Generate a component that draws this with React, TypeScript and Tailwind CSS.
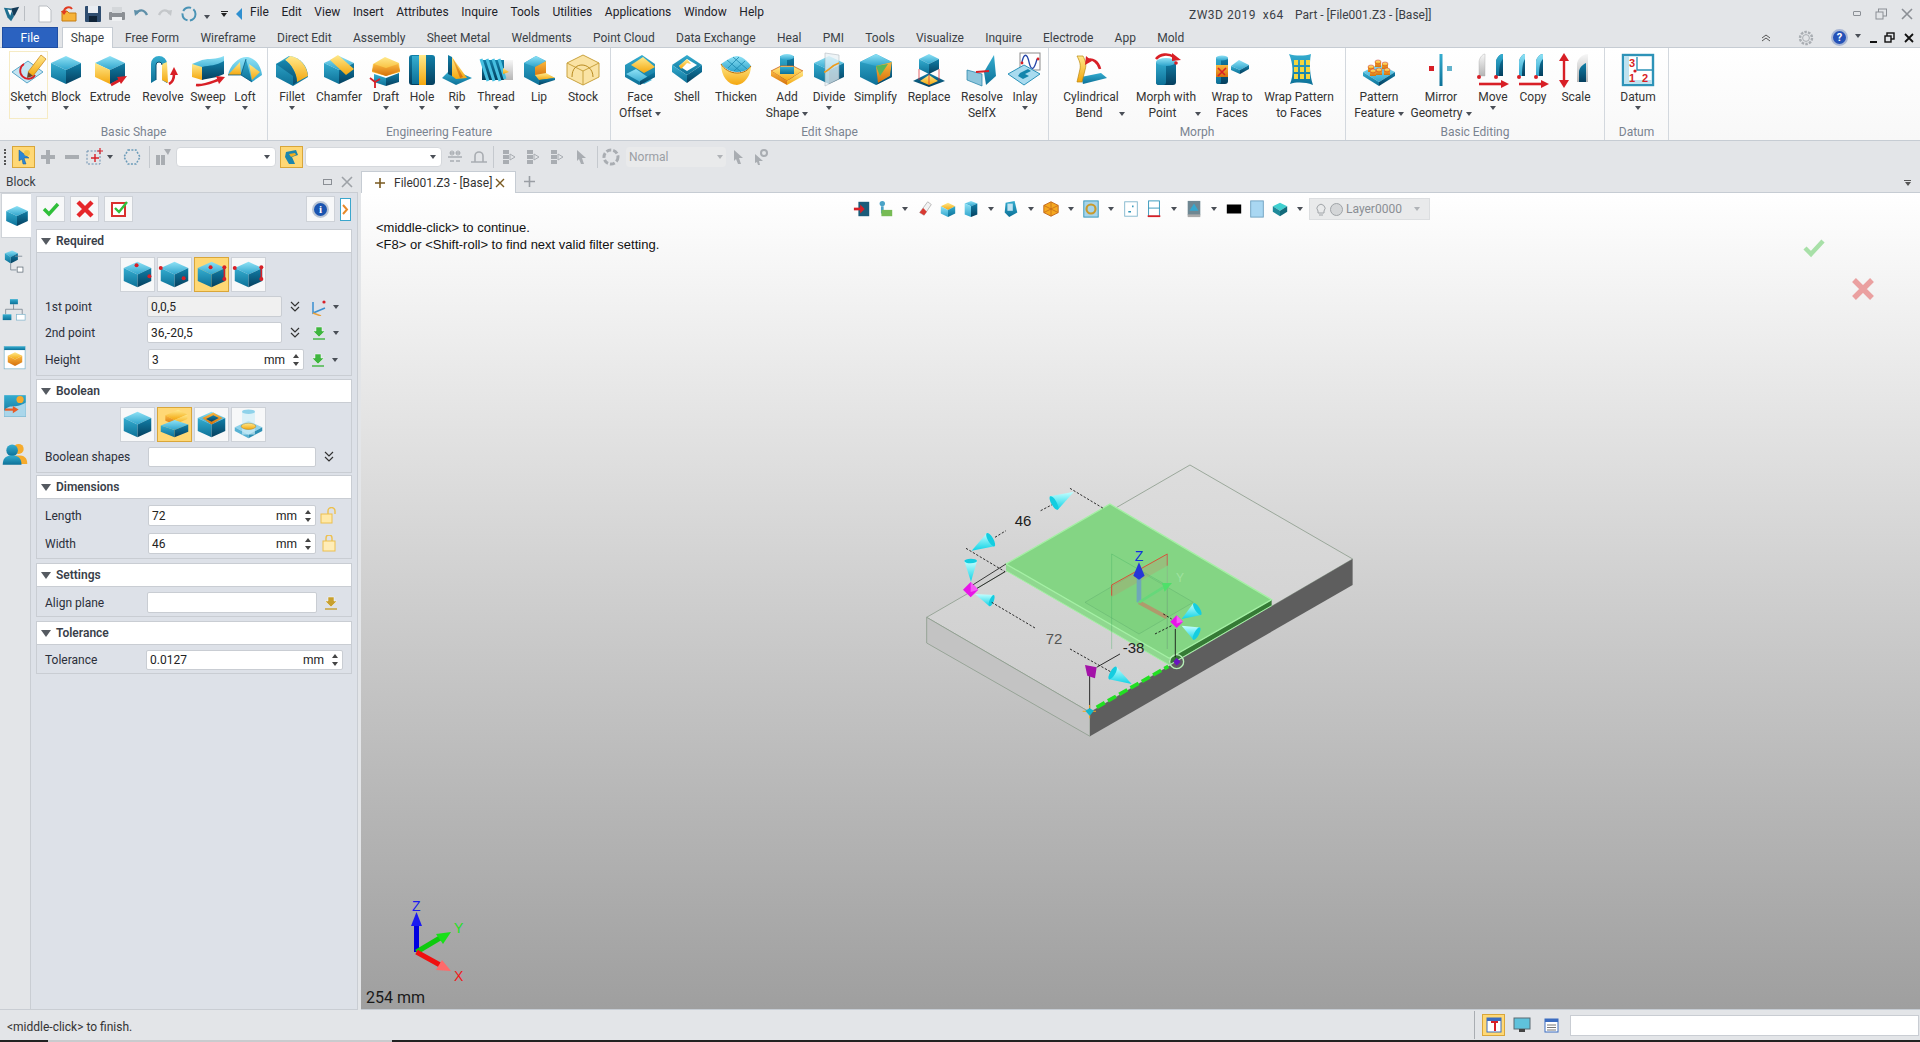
import type { ReactNode } from "react";

const T = "url(#gT)";
const L = "url(#gL)";
const R = "url(#gR)";
const Y = "url(#gY)";
const O = "url(#gO)";
const G = "url(#gG)";
const RED = "#d81f26";

function Defs() {
  const grad = (id: string, a: string, b: string) => (
    <linearGradient id={id} x1="0" y1="0" x2="0" y2="1">
      <stop offset="0" stopColor={a} />
      <stop offset="1" stopColor={b} />
    </linearGradient>
  );
  return (
    <svg className="absolute w-0 h-0">
      <defs>
        {grad("gT", "#8fe2f6", "#2fa4cc")}
        {grad("gL", "#35add0", "#0c7097")}
        {grad("gR", "#117fa8", "#053f5e")}
        {grad("gY", "#ffe98c", "#f4a70e")}
        {grad("gO", "#fab83f", "#d5700b")}
        {grad("gG", "#f7f7f7", "#b5b5b5")}
        {grad("gC", "#c6ffff", "#0fd3e6")}
        {grad("gTop", "#dddddd", "#cdcdcd")}
      </defs>
    </svg>
  );
}

function Ic({ children, s = 36 }: { children: ReactNode; s?: number }) {
  return (
    <svg viewBox="0 0 36 36" width={s} height={s} className="shrink-0">
      {children}
    </svg>
  );
}

function Cube({ t = T, l = L, r = R, op = 1 }: { t?: string; l?: string; r?: string; op?: number }) {
  return (
    <g opacity={op}>
      <polygon points="18,4 33,11 18,18 3,11" fill={t} />
      <polygon points="3,11 18,18 18,32 3,25" fill={l} />
      <polygon points="18,18 33,11 33,25 18,32" fill={r} />
    </g>
  );
}

function Rarrow({ d, head }: { d: string; head: string }) {
  return (
    <>
      <path d={d} fill="none" stroke={RED} strokeWidth="2.6" />
      <polygon points={head} fill={RED} />
    </>
  );
}

const icons: Record<string, ReactNode> = {
  sketch: (
    <>
      <polygon points="1,20 17,9 32,20 16,31" fill="#c4e5f3" stroke="#5aa6c8" />
      <path d="M13 12a8 8 0 1 0 11 11" fill="none" stroke={RED} strokeWidth="1.8" />
      <polygon points="17,20 30,3 35,7 22,24" fill={Y} stroke="#c77f10" strokeWidth=".7" />
      <polygon points="17,20 22,24 16,26" fill="#6b4524" />
    </>
  ),
  block: <Cube />,
  extrude: (
    <>
      <Cube l={Y} />
      <Rarrow d="M19 33l9-5" head="35,24 25,25 29,32" />
    </>
  ),
  revolve: (
    <>
      <path d="M6 31V12a8 8 0 0 1 16 0v19l-5-3V13a3 3 0 0 0-6 0v15z" fill={L} />
      <polygon points="17,12 22,10 23,31 17,28" fill={Y} />
      <path d="M11 28v-15a3 3 0 0 1 6 0" fill="none" stroke="#0a4f70" />
      <Rarrow d="M24 32c4-2 5-6 5-10" head="29,15 25,23 33,23" />
    </>
  ),
  sweep: (
    <>
      <path d="M2 12l10-4c8-2 13 0 22-4v13c-8 3-14 2-22 2z" fill={T} />
      <path d="M12 15c8-2 14-1 22-6v13c-8 4-14 4-22 6z" fill={R} />
      <polygon points="2,12 12,15 12,28 2,25" fill={Y} />
      <Rarrow d="M6 33c8 1 16-3 22-5" head="35,25 26,24 29,32" />
    </>
  ),
  loft: (
    <>
      <path d="M1 23C3 12 13 4 21 5c8 2 13 9 14 18l-10 7-11-7z" fill={T} />
      <polygon points="14,23 19,7 25,30" fill={L} />
      <polygon points="1,23 14,23 13,10" fill={Y} />
      <polygon points="22,12 33,20 25,28" fill={Y} />
      <path d="M19 7L14 23l11 7M1 23h13" fill="none" stroke="#0a5a80" strokeWidth=".8" />
    </>
  ),
  fillet: (
    <>
      <path d="M2 12L15 4c11 1 19 10 19 21l-15 9L2 25z" fill={L} />
      <path d="M11 8l5-4c10 1 17 10 18 20l-11 6c0-9-6-18-12-22z" fill={Y} />
      <path d="M2 12l9-4c6 4 12 13 12 22l-4 3V24z" fill={R} opacity=".75" />
    </>
  ),
  chamfer: (
    <>
      <Cube />
      <polygon points="9,8 17,3 33,17 25,23" fill={Y} />
    </>
  ),
  draft: (
    <>
      <polygon points="5,12 17,5 31,11 32,20 18,24 4,20" fill={Y} />
      <polygon points="4,19 18,24 32,19 30,12 18,16 6,12" fill={O} />
      <polygon points="6,22 18,26 18,34 6,30" fill={L} />
      <polygon points="18,26 31,21 31,30 18,34" fill={R} />
      <path d="M7 36v-6l-5-4m5 4l5-3" fill="none" stroke={RED} strokeWidth="1.8" />
    </>
  ),
  hole: (
    <>
      <rect x="5" y="3" width="26" height="30" rx="3" fill={R} />
      <rect x="8" y="4" width="8" height="28" fill={L} />
      <rect x="15" y="3" width="7" height="30" fill={Y} />
    </>
  ),
  rib: (
    <>
      <polygon points="3,26 17,33 33,26 22,21 17,24 9,20" fill={L} />
      <polygon points="9,3 13,5 13,24 17,26 9,22" fill={R} />
      <polygon points="13,5 28,26 17,27 13,24" fill={Y} />
      <polygon points="13,5 16,10 24,25 21,26" fill={O} />
    </>
  ),
  thread: (
    <>
      <rect x="22" y="8" width="13" height="20" fill={G} />
      <rect x="4" y="8" width="22" height="20" fill={R} />
      <path d="M3 7l7 22M9 7l7 22M15 7l7 22M21 7l6 20" stroke="#47bfe0" strokeWidth="3" />
      <polygon points="25,16 31,20 25,22" fill={Y} />
    </>
  ),
  lip: (
    <>
      <polygon points="3,11 15,4 25,9 25,22 34,26 18,33 3,25" fill={L} />
      <polygon points="15,4 25,9 14,15 3,11" fill={T} />
      <polygon points="14,15 25,9 25,21 18,25 14,23" fill={O} />
      <polygon points="14,23 25,21 34,26 18,28" fill={Y} />
      <polygon points="18,28 34,26 34,28 18,33" fill={R} />
    </>
  ),
  stock: (
    <>
      <polygon points="18,3 34,11 34,25 18,33 2,25 2,11" fill="#fae3a4" stroke="#c9a23e" />
      <path d="M2 11l16 8 16-8M18 19v14" fill="none" stroke="#c9a23e" />
      <path d="M7 25c0-9 5-12 10-12s11 4 11 12" fill="none" stroke="#b88a20" />
    </>
  ),
  faceoffset: (
    <>
      <polygon points="3,13 20,3 33,12 33,25 17,33 3,25" fill={L} />
      <polygon points="9,13 21,5 33,15 22,21" fill={Y} />
      <polygon points="4,22 14,17 30,28 22,32" fill={T} />
      <polygon points="18,33 33,25 33,20 18,29" fill={R} />
    </>
  ),
  shell: (
    <>
      <polygon points="18,3 33,13 18,23 3,13" fill={L} />
      <polygon points="18,7 28,13 18,19 10,14" fill="#fff" />
      <polygon points="18,7 10,14 12,17 18,11 22,12" fill={Y} />
      <polygon points="3,13 18,23 18,31 3,20" fill={L} />
      <polygon points="18,23 33,13 33,20 18,31" fill={R} />
    </>
  ),
  thicken: (
    <>
      <path d="M3 12c6-4 12-8 16-8s10 4 14 10c-3 3-6 6-14 6S7 16 3 12z" fill={T} />
      <path d="M9 8l14 12M15 5l14 12M21 5L10 16M27 9L16 19" stroke="#1a86ad" strokeWidth=".8" />
      <path d="M3 12c3 5 9 9 16 9s11-3 14-7c0 9-6 18-14 19C10 33 3 24 3 12z" fill={Y} />
      <path d="M3 12c3 5 9 9 16 9s11-3 14-7" fill="none" stroke="#b36a05" />
    </>
  ),
  addshape: (
    <>
      <rect x="11" y="4" width="14" height="24" fill={R} />
      <rect x="11" y="4" width="7" height="24" fill={L} />
      <ellipse cx="18" cy="5" rx="7" ry="3" fill={T} />
      <polygon points="2,19 12,14 24,14 34,19 18,29" fill={Y} stroke="#cc5c14" strokeWidth=".8" />
      <rect x="11" y="15" width="14" height="7" fill={L} />
      <polygon points="2,19 18,29 18,33 2,24" fill={O} />
      <polygon points="18,29 34,19 34,24 18,33" fill={Y} />
    </>
  ),
  divide: (
    <>
      <Cube />
      <polygon points="14,1 28,3 28,27 14,34" fill="#e9f1f5" opacity=".75" stroke="#9aa5ad" strokeWidth=".6" />
      <path d="M13 20c4 0 6-6 15-9" fill="none" stroke="#ee9a19" strokeWidth="1.6" />
    </>
  ),
  simplify: (
    <>
      <polygon points="18,2 34,10 34,25 18,33 2,25 2,10" fill={L} />
      <polygon points="2,10 18,2 34,10 18,14" fill={T} />
      <polygon points="18,14 34,10 32,24 20,31" fill={O} />
      <polygon points="18,14 30,12 22,24" fill="#56b55a" />
      <polygon points="18,33 34,25 34,10 32,24 20,31" fill={R} />
    </>
  ),
  replace: (
    <>
      <polygon points="18,21 2,29 18,35 34,29" fill={R} />
      <polygon points="18,23 9,29 18,33 27,29" fill={Y} />
      <polygon points="18,2 28,7 18,12 8,7" fill={T} />
      <polygon points="8,7 18,12 18,22 8,17" fill={L} />
      <polygon points="18,12 28,7 28,17 18,22" fill={R} />
      <path d="M8 17v11M28 17v11M18 22v11" stroke={RED} strokeWidth=".7" />
    </>
  ),
  resolve: (
    <>
      <polygon points="20,20 30,3 32,24 22,33" fill={L} />
      <polygon points="3,18 18,22 18,34 3,28" fill="#8fc6dc" stroke="#1b7ea6" strokeWidth=".7" />
      <path d="M12 20l13-1" stroke={RED} strokeWidth="2.2" />
    </>
  ),
  inlay: (
    <>
      <rect x="13" y="1" width="20" height="17" fill="#fff" stroke="#8b8b8b" />
      <path d="M15 10c2-9 5-9 7 0s5 9 8-3" fill="none" stroke="#2747a8" strokeWidth="1.3" />
      <circle cx="15" cy="11" r="1.4" fill={RED} />
      <circle cx="31" cy="7" r="1.4" fill={RED} />
      <polygon points="1,22 17,13 33,22 17,33" fill="#a9dbef" stroke="#2b93ba" />
      <path d="M13 21l8-4 3 2-6 3 4 2-6 3-5-3z" fill="#1585ad" />
    </>
  ),
  cylbend: (
    <>
      <polygon points="10,32 34,26 28,21 8,25" fill={L} />
      <path d="M4 4h6c2 4 4 8 2 14l-3 12H4l3-13C8 12 6 8 4 4z" fill={Y} stroke="#b9860f" strokeWidth=".7" />
      <Rarrow d="M14 8c6-2 11 2 13 9" head="13,4 12,13 19,9" />
    </>
  ),
  morphpoint: (
    <>
      <rect x="8" y="9" width="20" height="24" rx="3" fill={R} />
      <rect x="8" y="9" width="10" height="24" rx="3" fill={L} />
      <ellipse cx="18" cy="10" rx="10" ry="4" fill={T} />
      <Rarrow d="M8 7c4-5 12-6 18-2" head="33,8 24,1 24,9" />
      <circle cx="28" cy="11" r="1.8" fill={RED} />
    </>
  ),
  wrapfaces: (
    <>
      <rect x="2" y="5" width="12" height="27" rx="3" fill={R} />
      <rect x="2" y="5" width="5" height="27" rx="2" fill={L} />
      <ellipse cx="8" cy="6" rx="6" ry="2.5" fill={T} />
      <rect x="2" y="13" width="12" height="12" fill={O} />
      <path d="M4 24l8-8M4 16l7 7" stroke={RED} strokeWidth="1.6" />
      <polygon points="25,8 35,13 26,18 17,14" fill={T} />
      <polygon points="17,14 26,18 26,22 17,18" fill={L} />
      <polygon points="26,18 35,13 35,17 26,22" fill={R} />
    </>
  ),
  wrappattern: (
    <>
      <path d="M8 2c6 2 16 2 22 0-2 10-1 22 2 31-8-3-17-3-23-1 4-9 3-21-1-30z" fill={L} />
      {[10, 17, 24].map((y) => [13, 19, 25].map((x) => <rect key={`${x}${y}`} x={x} y={y - 2} width="4" height="5" fill="#f6d63c" />))}
    </>
  ),
  pattern: (
    <>
      <polygon points="18,12 34,20 18,30 2,20" fill={T} />
      <polygon points="2,20 18,30 18,34 2,24" fill={L} />
      <polygon points="18,30 34,20 34,24 18,34" fill={R} />
      {[[10, 17], [17, 12], [24, 14], [18, 20], [26, 20], [12, 21]].map(([x, y]) => (
        <g key={`${x}${y}`}>
          <rect x={x - 3} y={y - 2} width="6" height="5" fill={O} />
          <ellipse cx={x} cy={y - 2} rx="3" ry="2" fill={Y} stroke="#c7242a" strokeWidth=".5" />
        </g>
      ))}
    </>
  ),
  mirror: (
    <>
      <rect x="16.5" y="2" width="3" height="32" fill={L} />
      <rect x="6" y="14" width="5" height="5" fill={RED} />
      <rect x="24" y="14" width="5" height="5" fill="#62b2cc" />
    </>
  ),
  move: (
    <>
      <path d="M4 24V10c0-3 3-8 6-8v22z" fill={G} stroke="#aaa" strokeWidth=".4" />
      <path d="M21 24V10c0-3 3-8 7-8v22z" fill={R} />
      <path d="M21 24V10c0-3 3-8 7-8v5c-3 3-4 8-4 17z" fill={L} />
      <circle cx="4" cy="25" r="2" fill={RED} />
      <circle cx="21" cy="25" r="2" fill={RED} />
      <path d="M4 32h22" stroke={RED} strokeWidth="2.6" />
      <polygon points="26,28 34,32 26,36" fill={RED} />
    </>
  ),
  copy: (
    <>
      <path d="M4 24V10c0-3 3-8 6-8v22z" fill={R} />
      <path d="M21 24V10c0-3 3-8 7-8v22z" fill={R} />
      <path d="M4 24V10c0-3 3-8 6-8v5c-2 3-3 8-3 17z" fill={T} />
      <path d="M21 24V10c0-3 3-8 7-8v5c-3 3-4 8-4 17z" fill={T} />
      <circle cx="4" cy="25" r="2" fill={RED} />
      <circle cx="21" cy="25" r="2" fill={RED} />
      <path d="M4 32h22" stroke={RED} strokeWidth="2.6" />
      <polygon points="26,28 34,32 26,36" fill={RED} />
    </>
  ),
  scale: (
    <>
      <path d="M6 7v24" stroke={RED} strokeWidth="2.4" />
      <polygon points="6,1 11,9 1,9" fill={RED} />
      <polygon points="6,36 11,28 1,28" fill={RED} />
      <path d="M19 30V12c0-4 5-10 11-10v28z" fill={G} />
      <path d="M21 30V20c0-4 3-7 7-9v19z" fill={R} />
    </>
  ),
  datum: (
    <>
      <rect x="3" y="3" width="30" height="30" fill="#fff" stroke="#2d93b8" strokeWidth="2.4" />
      <rect x="4" y="4" width="5" height="28" fill="#bfe2ef" />
      <rect x="4" y="28" width="28" height="4" fill="#bfe2ef" />
      <path d="M17 5v13h15" fill="none" stroke="#2d93b8" strokeWidth="1.4" />
      <circle cx="15" cy="19" r="1.6" fill={RED} />
      <text x="9" y="15" fontSize="11" fontWeight="700" fill={RED} fontFamily="Liberation Sans">3</text>
      <text x="9" y="30" fontSize="11" fontWeight="700" fill={RED} fontFamily="Liberation Sans">1</text>
      <text x="22" y="30" fontSize="11" fontWeight="700" fill={RED} fontFamily="Liberation Sans">2</text>
    </>
  ),
};

type Item = { a: string; b?: string; w: string; icon: string; caret?: boolean; b2?: string };
type Group = { title: string; w: string; pad: string; items: Item[] };

const groups: Group[] = [
  {
    title: "Basic Shape",
    w: "w-[268px]",
    pad: "pl-[9px]",
    items: [
      { a: "Sketch", w: "w-[39px]", icon: "sketch", caret: true },
      { a: "Block", w: "w-[36px]", icon: "block", caret: true },
      { a: "Extrude", w: "w-[52px]", icon: "extrude" },
      { a: "Revolve", w: "w-[54px]", icon: "revolve" },
      { a: "Sweep", w: "w-[36px]", icon: "sweep", caret: true },
      { a: "Loft", w: "w-[38px]", icon: "loft", caret: true },
    ],
  },
  {
    title: "Engineering Feature",
    w: "w-[343px]",
    pad: "pl-[2px]",
    items: [
      { a: "Fillet", w: "w-[44px]", icon: "fillet", caret: true },
      { a: "Chamfer", w: "w-[50px]", icon: "chamfer" },
      { a: "Draft", w: "w-[44px]", icon: "draft", caret: true },
      { a: "Hole", w: "w-[28px]", icon: "hole", caret: true },
      { a: "Rib", w: "w-[42px]", icon: "rib", caret: true },
      { a: "Thread", w: "w-[36px]", icon: "thread", caret: true },
      { a: "Lip", w: "w-[50px]", icon: "lip" },
      { a: "Stock", w: "w-[38px]", icon: "stock" },
    ],
  },
  {
    title: "Edit Shape",
    w: "w-[438px]",
    pad: "pl-[7px]",
    items: [
      { a: "Face", b: "Offset", w: "w-[44px]", icon: "faceoffset", caret: true },
      { a: "Shell", w: "w-[50px]", icon: "shell" },
      { a: "Thicken", w: "w-[48px]", icon: "thicken" },
      { a: "Add", b: "Shape", w: "w-[54px]", icon: "addshape", caret: true },
      { a: "Divide", w: "w-[30px]", icon: "divide", caret: true },
      { a: "Simplify", w: "w-[63px]", icon: "simplify" },
      { a: "Replace", w: "w-[44px]", icon: "replace" },
      { a: "Resolve", b: "SelfX", w: "w-[62px]", icon: "resolve" },
      { a: "Inlay", w: "w-[24px]", icon: "inlay", caret: true },
    ],
  },
  {
    title: "Morph",
    w: "w-[297px]",
    pad: "pl-[0px]",
    items: [
      { a: "Cylindrical", b: "Bend", b2: "pl-[18px] gap-[16px]", w: "w-[84px]", icon: "cylbend", caret: true },
      { a: "Morph with", b: "Point", b2: "pl-[18px] gap-[19px]", w: "w-[66px]", icon: "morphpoint", caret: true },
      { a: "Wrap to", b: "Faces", w: "w-[66px]", icon: "wrapfaces" },
      { a: "Wrap Pattern", b: "to Faces", w: "w-[68px]", icon: "wrappattern" },
    ],
  },
  {
    title: "Basic Editing",
    w: "w-[259px]",
    pad: "pl-[0px]",
    items: [
      { a: "Pattern", b: "Feature", w: "w-[66px]", icon: "pattern", caret: true },
      { a: "Mirror", b: "Geometry", w: "w-[58px]", icon: "mirror", caret: true },
      { a: "Move", w: "w-[46px]", icon: "move", caret: true },
      { a: "Copy", w: "w-[34px]", icon: "copy" },
      { a: "Scale", w: "w-[52px]", icon: "scale" },
    ],
  },
  {
    title: "Datum",
    w: "w-[64px]",
    pad: "pl-[3px]",
    items: [{ a: "Datum", w: "w-[60px]", icon: "datum", caret: true }],
  },
];

function Caret({ c = "border-t-[#4a4f57]" }: { c?: string }) {
  return <span className={`inline-block w-0 h-0 border-x-[3px] border-x-transparent border-t-[4px] ${c}`} />;
}

function RibbonButton({ it }: { it: Item }) {
  const hover = it.a === "Sketch" ? "border-[#f6ebc4]" : "border-transparent";
  return (
    <div className={`${it.w} shrink-0 h-[68px] border ${hover} flex flex-col items-center`}>
      <div className="h-[36px] w-full flex justify-center">
        <Ic>{icons[it.icon]}</Ic>
      </div>
      <div className="mt-[2px] text-xs leading-[15px] whitespace-nowrap flex justify-center">{it.a}</div>
      <div className={`mt-[1px] text-xs leading-[15px] whitespace-nowrap flex justify-center items-center ${it.b2 ?? "gap-[3px]"}`}>
        {it.b}
        {it.caret && <Caret />}
      </div>
    </div>
  );
}

function Ribbon() {
  return (
    <div className="h-[94px] border-y border-[#c6ccd3] bg-gradient-to-b from-white to-[#f8f8f8] flex shrink-0">
      {groups.map((g) => (
        <div key={g.title} className={`${g.w} shrink-0 border-r border-[#d3d8de] flex flex-col`}>
          <div className={`flex pt-[3px] h-[76px] ${g.pad}`}>
            {g.items.map((it) => (
              <RibbonButton key={it.a} it={it} />
            ))}
          </div>
          <div className="text-xs leading-[14px] mt-[1px] text-center text-[#7a8390]">{g.title}</div>
        </div>
      ))}
    </div>
  );
}

function TitleBar() {
  const menus = ["File", "Edit", "View", "Insert", "Attributes", "Inquire", "Tools", "Utilities", "Applications", "Window", "Help"];
  return (
    <div className="h-[27px] flex items-center shrink-0 relative">
      <div className="w-[24px] pl-[3px] flex">
        <svg viewBox="0 0 20 20" width="18" height="18">
          <path d="M1 3l8 1 3 9-3 5-4-4z" fill="#1f6f90" />
          <path d="M9 4l9-2-4 8-2 3z" fill="#143b57" />
          <path d="M5 5l3 7 2-6z" fill="#fff" />
        </svg>
      </div>
      <div className="w-px h-[15px] bg-[#b9bdc2] mr-[8px]" />
      <div className="flex items-center w-[168px]">
        <span className="w-[24px] flex justify-center">
          <svg width="14" height="18" viewBox="0 0 14 18"><path d="M1 1h8l4 4v12H1z" fill="#fff" stroke="#b9bdc2" /></svg>
        </span>
        <span className="w-[24px] flex justify-center">
          <svg width="18" height="18" viewBox="0 0 18 18"><path d="M2 6h5l2 2h7v8H2z" fill="#f6b338" stroke="#c67d12" /><path d="M4 7c0-5 6-6 8-3" fill="none" stroke="#e13b21" strokeWidth="2" /><polygon points="1,6 7,6 4,10" fill="#e13b21" /></svg>
        </span>
        <span className="w-[24px] flex justify-center">
          <svg width="18" height="18" viewBox="0 0 18 18"><rect x="1" y="1" width="16" height="16" rx="1" fill="#2f4d70" /><rect x="4" y="1" width="10" height="7" fill="#e9edf2" /><rect x="5" y="11" width="8" height="6" fill="#0f2338" /></svg>
        </span>
        <span className="w-[24px] flex justify-center">
          <svg width="18" height="18" viewBox="0 0 18 18"><rect x="1" y="7" width="16" height="8" rx="1" fill="#8b8f94" /><rect x="4" y="2" width="10" height="6" fill="#d4d7da" /><rect x="4" y="12" width="10" height="4" fill="#eef0f2" /></svg>
        </span>
        <span className="w-[24px] flex justify-center">
          <svg width="16" height="16" viewBox="0 0 16 16"><path d="M3 8c3-5 8-5 11 1" fill="none" stroke="#5e8fa8" strokeWidth="2.4" /><polygon points="1,4 7,5 2,10" fill="#5e8fa8" /></svg>
        </span>
        <span className="w-[24px] flex justify-center">
          <svg width="16" height="16" viewBox="0 0 16 16"><path d="M13 8C10 3 5 3 2 9" fill="none" stroke="#c4c7ca" strokeWidth="2.4" /><polygon points="15,4 9,5 14,10" fill="#c4c7ca" /></svg>
        </span>
        <span className="w-[24px] flex justify-center">
          <svg width="18" height="18" viewBox="0 0 18 18"><circle cx="9" cy="9" r="6.5" fill="none" stroke="#4a93b5" strokeWidth="2" strokeDasharray="9 2.5" /></svg>
        </span>
      </div>
      <span className="ml-[3px] w-[12px]"><Caret /></span>
      <span className="w-[16px] flex flex-col items-center gap-[1px]"><span className="w-[7px] h-px bg-[#222]" /><Caret c="border-t-[#222]" /></span>
      <span className="w-[14px] flex justify-center"><span className="w-0 h-0 border-y-[6px] border-y-transparent border-r-[6px] border-r-[#2f8fd0]" /></span>
      <div className="flex gap-[12.6px] w-[939px] text-xs ml-[4px] text-[#1e2228] -mt-[3px]">
        {menus.map((m) => (
          <span key={m}>{m}</span>
        ))}
      </div>
      <span className="w-[106px] text-xs tracking-[0.5px] text-[#3a3f46] mt-[3px] whitespace-pre">ZW3D 2019  x64</span>
      <span className="text-xs text-[#3a3f46] mt-[3px]">Part - [File001.Z3 - [Base]]</span>
      <div className="ml-auto flex items-center gap-[14px] pr-[7px] text-[#8b8f95]">
        <span className="w-[8px] h-[5px] border border-[#8b8f95] rounded-[1px]" />
        <svg width="12" height="12" viewBox="0 0 12 12"><rect x="3.5" y="1" width="8" height="7" fill="none" stroke="#8b8f95" /><rect x="1" y="4" width="7" height="7" fill="#e3e5e8" stroke="#8b8f95" /></svg>
        <svg width="12" height="12" viewBox="0 0 12 12"><path d="M1 1l10 10M11 1L1 11" stroke="#8b8f95" strokeWidth="1.6" /></svg>
      </div>
    </div>
  );
}

function TabBar() {
  const tabs = ["Free Form", "Wireframe", "Direct Edit", "Assembly", "Sheet Metal", "Weldments", "Point Cloud", "Data Exchange", "Heal", "PMI", "Tools", "Visualize", "Inquire", "Electrode", "App", "Mold"];
  return (
    <div className="h-[21px] flex items-end text-xs shrink-0 relative z-10 -mb-px">
      <div className="ml-[2px] w-[56px] h-[21px] bg-[#2b62c0] border border-[#1f4ea3] text-white flex items-center justify-center">File</div>
      <div className="ml-[4px] w-[51px] h-[21px] bg-white border-x border-t border-[#c6ccd3] flex items-center justify-center text-[#3a3f46]">Shape</div>
      <div className="flex gap-[21.3px] ml-[12px] h-[20px] items-center text-[#3a3f46]">
        {tabs.map((t) => (
          <span key={t} className="whitespace-nowrap">{t}</span>
        ))}
      </div>
      <div className="ml-auto h-[21px] flex items-center pr-[6px]">
        <svg width="12" height="12" viewBox="0 0 12 12"><path d="M2 6l4-3 4 3M2 9l4-3 4 3" fill="none" stroke="#555" /></svg>
        <svg className="ml-[25px]" width="18" height="18" viewBox="0 0 18 18"><circle cx="9" cy="9" r="6" fill="none" stroke="#a9adb2" strokeWidth="2.4" strokeDasharray="2.5 1.2" /><circle cx="9" cy="9" r="3.4" fill="none" stroke="#a9adb2" /></svg>
        <span className="ml-[16px] w-[17px] h-[17px] rounded-full bg-[#2552b8] border-2 border-[#a8b6d4] text-white text-[11px] font-bold leading-none flex items-center justify-center">?</span>
        <span className="ml-[7px] -mt-[4px] flex"><Caret /></span>
        <span className="ml-[9px] w-[7px] h-[2px] bg-[#111] mt-[8px]" />
        <svg className="ml-[7px]" width="11" height="11" viewBox="0 0 11 11"><rect x="3" y="1" width="7" height="6" fill="none" stroke="#111" strokeWidth="1.4" /><rect x="1" y="4" width="6" height="6" fill="#e3e5e8" stroke="#111" strokeWidth="1.4" /></svg>
        <svg className="ml-[9px]" width="10" height="10" viewBox="0 0 10 10"><path d="M1 1l8 8M9 1L1 9" stroke="#111" strokeWidth="1.8" /></svg>
      </div>
    </div>
  );
}

function Combo({ w, text }: { w: string; text?: string }) {
  return (
    <div className={`${w} h-[20px] shrink-0 bg-white border border-[#d5d8dc] rounded-sm flex items-center justify-end pr-[5px]`}>
      {text}
      <Caret />
    </div>
  );
}

function G20({ children }: { children: ReactNode }) {
  return (
    <svg viewBox="0 0 20 20" width="20" height="20" className="shrink-0">
      {children}
    </svg>
  );
}

const Y_BTN = "bg-[#ffd875] border border-[#d9a63a] flex items-center justify-center shrink-0";

function Toolbar() {
  const gray = "#a9adb2";
  const Sep = () => <span className="block w-px h-[22px] bg-[#c5c9ce] shrink-0" />;
  return (
    <div className="h-[30px] pt-[2px] flex items-center shrink-0">
      <span className="ml-[4px] w-[2px] h-[16px] border-l-2 border-dotted border-[#555]" />
      <div className={`ml-[6px] w-[23px] h-[22px] ${Y_BTN}`}>
        <svg width="16" height="16" viewBox="0 0 16 16"><polygon points="3,1 13,9 8,9 10,15 7,15 6,10 3,12" fill="#2b86d6" stroke="#135a9a" strokeWidth=".5" /><circle cx="11" cy="4" r="3" fill="#f3c64b" /></svg>
      </div>
      <div className="ml-[2px] w-[22px] flex justify-center"><G20><path d="M10 3v14M3 10h14" stroke={gray} strokeWidth="4" /></G20></div>
      <div className="ml-[1px] w-[24px] flex justify-center"><G20><path d="M3 10h14" stroke={gray} strokeWidth="4" /></G20></div>
      <div className="-ml-[2px] w-[24px] flex justify-center"><G20><rect x="3" y="4" width="13" height="13" fill="none" stroke="#6a8fb0" strokeDasharray="2 1.6" /><path d="M7 11h8M11 7v8" stroke={RED} strokeWidth="1.4" /><path d="M13 4h6M16 1v6" stroke={RED} strokeWidth="1.2" /></G20></div>
      <span className="ml-[1px] w-[14px] flex"><Caret /></span>
      <div className="w-[22px] flex justify-center"><G20><polygon points="6,3 14,3 18,10 14,17 6,17 2,10" fill="none" stroke="#6a9ab8" strokeWidth="1.5" strokeDasharray="2 1.4" /></G20></div>
      <span className="ml-[6px]"><Sep /></span>
      <div className="ml-[1px] w-[23px] flex justify-center"><G20><rect x="3" y="8" width="4" height="10" fill={gray} /><rect x="8" y="8" width="4" height="10" fill={gray} /><polygon points="11,2 18,2 15,8" fill={gray} /></G20></div>
      <div className="ml-[2px]"><Combo w="w-[100px]" /></div>
      <div className={`ml-[4px] w-[23px] h-[22px] ${Y_BTN}`}>
        <svg width="17" height="17" viewBox="0 0 17 17"><polygon points="3,3 13,1 15,6 9,8 12,15 6,15 2,8" fill="#1d86ad" /><polygon points="6,5 12,4 13,6 8,8" fill="#f3ae1d" /></svg>
      </div>
      <div className="ml-[2px]"><Combo w="w-[137px]" /></div>
      <div className="ml-[2px] w-[22px] flex justify-center"><G20><path d="M3 10h14M5 6h4M11 6h4M5 14h4M11 14h4" stroke={gray} strokeWidth="1.4" /><circle cx="7" cy="6" r="2" fill="none" stroke={gray} /><circle cx="13" cy="6" r="2" fill="none" stroke={gray} /></G20></div>
      <div className="ml-[1px] w-[24px] flex justify-center"><G20><path d="M2 15h16M6 15V9a4 4 0 0 1 8 0v6" fill="none" stroke={gray} strokeWidth="1.6" /></G20></div>
      <span className="ml-[2px]"><Sep /></span>
      {[0, 1, 2].map((k) => (
        <div key={k} className="ml-[2px] w-[22px] flex justify-center"><G20><path d="M6 3h6v4H6zM6 8h6v4H6zM6 13h6v4H6z" fill={gray} /><polygon points="13,7 18,10 13,13" fill="#e3e5e8" stroke={gray} /></G20></div>
      ))}
      <div className="ml-[4px] w-[22px] flex justify-center"><G20><polygon points="6,3 15,11 11,11 13,17 10,17 8,12 6,14" fill={gray} /></G20></div>
      <span className="ml-[5px]"><Sep /></span>
      <div className="ml-[2px] w-[22px] flex justify-center"><G20><circle cx="10" cy="10" r="7" fill="none" stroke={gray} strokeWidth="3" strokeDasharray="5 2" /></G20></div>
      <div className="ml-[4px] w-[100px] h-[20px] bg-[#e9eaeb] rounded-sm flex items-center justify-between px-[3px] text-xs text-[#9a9ea4]">
        Normal
        <Caret c="border-t-[#b0b3b7]" />
      </div>
      <div className="ml-[2px] w-[22px] flex justify-center"><G20><polygon points="5,3 14,11 10,11 12,17 9,17 7,12 5,14" fill={gray} /></G20></div>
      <div className="w-[22px] flex justify-center"><G20><polygon points="4,7 12,14 8,14 9,18 7,18 6,15 4,16" fill={gray} /><circle cx="13" cy="6" r="3" fill="none" stroke={gray} strokeWidth="2" /></G20></div>
    </div>
  );
}

function PanelBtn({ sel, children }: { sel?: boolean; children: ReactNode }) {
  return (
    <div className={`w-[35px] h-[35px] flex items-center justify-center border shrink-0 ${sel ? "bg-[#ffd875] border-[#d9a63a]" : "bg-[#f7f8f9] border-[#ced2d8]"}`}>
      <Ic s={33}>{children}</Ic>
    </div>
  );
}

function Dot({ x, y }: { x: number; y: number }) {
  return <circle cx={x} cy={y} r="2.2" fill={RED} />;
}

function Section({ title, children, cls }: { title: string; children: ReactNode; cls: string }) {
  return (
    <div className={`${cls} border border-[#c9cdd3]`}>
      <div className="h-[23px] bg-white border-b border-[#c9cdd3] flex items-center">
        <span className="ml-[4px] w-0 h-0 border-x-[5px] border-x-transparent border-t-[7px] border-t-[#555a61]" />
        <span className="ml-[5px] text-xs font-semibold text-[#3a3f4a]">{title}</span>
      </div>
      {children}
    </div>
  );
}

function Chevrons() {
  return (
    <svg width="12" height="12" viewBox="0 0 12 12" className="shrink-0">
      <path d="M2 1l4 4 4-4M2 6l4 4 4-4" fill="none" stroke="#333" strokeWidth="1.2" />
    </svg>
  );
}

function Spin() {
  return (
    <span className="flex flex-col gap-[4px] ml-[8px]">
      <span className="w-0 h-0 border-x-[3px] border-x-transparent border-b-[4px] border-b-[#444]" />
      <span className="w-0 h-0 border-x-[3px] border-x-transparent border-t-[4px] border-t-[#444]" />
    </span>
  );
}

function GreenPick({ c = "#3fb53f" }: { c?: string }) {
  return (
    <svg width="16" height="16" viewBox="0 0 16 16" className="shrink-0">
      <polygon points="5,2 11,2 11,6 14,6 8,12 2,6 5,6" fill={c} stroke="#fff" strokeWidth=".5" />
      <path d="M2 14h12" stroke={c} strokeWidth="1.4" />
    </svg>
  );
}

function Input({ w, h = "h-[21px]", bg = "bg-white", text, unit }: { w: string; h?: string; bg?: string; text?: string; unit?: boolean }) {
  return (
    <div className={`${w} ${h} ${bg} shrink-0 border border-[#c9cdd3] rounded-[2px] flex items-center pl-[3px] pr-[4px] text-xs text-[#222]`}>
      <span>{text}</span>
      {unit && (
        <>
          <span className="ml-auto">mm</span>
          <Spin />
        </>
      )}
    </div>
  );
}

function Label({ children }: { children: ReactNode }) {
  return <span className="ml-[8px] w-[102px] shrink-0 text-xs text-[#2b2f3a] whitespace-nowrap">{children}</span>;
}

function Panel() {
  const railIcons = [
    <g key="t">
      <polygon points="4,6 14,2 22,6 12,11" fill={T} /><polygon points="4,6 12,11 12,20 4,15" fill={L} /><polygon points="12,11 22,6 22,15 12,20" fill={R} />
      <path d="M12 20v9h8M18 10h10" stroke="#7d8a96" strokeWidth="1.2" fill="none" /><rect x="21" y="25" width="8" height="7" fill="#fff" stroke="#5b6873" />
    </g>,
    <g key="h">
      <rect x="11" y="3" width="11" height="7" fill={L} /><path d="M16 10v7M5 24v-7h23v7" stroke="#6e7b86" fill="none" /><rect x="1" y="24" width="12" height="8" fill={L} /><rect x="20" y="24" width="12" height="8" fill="#fff" stroke="#7fb5cc" />
    </g>,
    <g key="c">
      <rect x="3" y="2" width="29" height="31" fill="#fff" stroke="#7fb5cc" /><rect x="3" y="2" width="29" height="5" fill={L} />
      <polygon points="18,10 28,15 18,20 8,15" fill={Y} /><polygon points="8,15 18,20 18,29 8,24" fill={O} /><polygon points="18,20 28,15 28,24 18,29" fill={O} />
    </g>,
    <g key="i">
      <rect x="3" y="3" width="30" height="30" fill={L} /><path d="M3 25c8-12 14-2 30-12v20H3z" fill="#aad6ea" />
      <circle cx="25" cy="9" r="5" fill="#f6ab2c" /><path d="M4 23h12" stroke="#e85c25" strokeWidth="3" /><polygon points="15,18 23,23 15,28" fill="#e85c25" />
    </g>,
    <g key="u">
      <circle cx="23" cy="11" r="7" fill="#f6ab2c" /><path d="M10 32c0-10 6-12 13-12s12 2 12 12z" fill="#f6ab2c" />
      <circle cx="14" cy="13" r="8" fill={L} /><path d="M1 33c0-11 6-13 13-13s13 2 13 13z" fill={L} />
    </g>,
  ];
  return (
    <div className="w-[358px] shrink-0 flex flex-col">
      <div className="h-[21px] flex items-center justify-between pl-[6px] pr-[5px] text-xs text-[#3a3f46] shrink-0">
        <span>Block</span>
        <div className="flex items-center gap-[9px]">
          <span className="w-[9px] h-[6px] border border-[#8b8f95]" />
          <svg width="12" height="12" viewBox="0 0 12 12"><path d="M1 1l10 10M11 1L1 11" stroke="#9ea2a7" strokeWidth="1.6" /></svg>
        </div>
      </div>
      <div className="flex-1 flex min-h-0 border-y border-[#c9cdd3]">
        <div className="w-[31px] shrink-0 flex flex-col items-center border-r border-[#c9cdd3]">
          <div className="w-[30px] h-[45px] bg-white border-y border-l border-[#cfd3d8] -mr-[1px] ml-[1px] relative z-10 flex items-center justify-center">
            <Ic s={26}><Cube /></Ic>
          </div>
          <div className="flex flex-col items-center gap-[22px] mt-[11px]">
            {railIcons.map((ic, i) => (
              <Ic key={i} s={26}>{ic}</Ic>
            ))}
          </div>
        </div>
        <div className="flex-1 bg-[#dde1e8] border-r border-[#c9cdd3] px-[5px] pt-[3px]">
          <div className="flex h-[26px] items-center">
            <div className="w-[29px] h-[26px] bg-[#f7f8f9] border border-[#ced2d8] flex items-center justify-center">
              <svg width="18" height="16" viewBox="0 0 18 16"><path d="M2 8l5 5 9-10" fill="none" stroke="#2fbf3a" strokeWidth="3.4" /></svg>
            </div>
            <div className="ml-[5px] w-[29px] h-[26px] bg-[#f7f8f9] border border-[#ced2d8] flex items-center justify-center">
              <svg width="18" height="18" viewBox="0 0 18 18"><path d="M2 2l14 14M16 2L2 16" stroke="#e5262a" strokeWidth="4.4" /></svg>
            </div>
            <div className="ml-[5px] w-[29px] h-[26px] bg-[#f7f8f9] border border-[#ced2d8] flex items-center justify-center">
              <svg width="18" height="18" viewBox="0 0 18 18"><rect x="2" y="3" width="13" height="13" fill="#fff" stroke="#d9302f" strokeWidth="2" /><path d="M5 8l4 4 8-10" fill="none" stroke="#2fbf3a" strokeWidth="2.4" /></svg>
            </div>
            <div className="ml-auto w-[29px] h-[26px] bg-[#f7f8f9] border border-[#ced2d8] flex items-center justify-center">
              <span className="w-[17px] h-[17px] rounded-full bg-[#1a54b0] border-2 border-[#b9c4d4] text-white text-[11px] font-bold leading-none flex items-center justify-center font-['Liberation_Serif',serif]">i</span>
            </div>
            <div className="ml-[5px] mr-[1px] w-[11px] h-[23px] bg-white border border-[#3ba6cc] flex items-center justify-center">
              <svg width="7" height="11" viewBox="0 0 7 11"><path d="M1 1l4 4.5L1 10" fill="none" stroke="#e88a2a" strokeWidth="2" /></svg>
            </div>
          </div>

          <Section title="Required" cls="mt-[7px]">
            <div className="pt-[4px] pb-[5px]">
              <div className="flex justify-center gap-[2px] pr-[3px]">
                <PanelBtn><Cube /><Dot x={17} y={8} /><Dot x={31} y={20} /></PanelBtn>
                <PanelBtn><Cube /><Dot x={3} y={11} /><Dot x={28} y={22} /></PanelBtn>
                <PanelBtn sel><Cube /><Dot x={17} y={10} /><path d="M32 10v13" stroke={RED} strokeWidth="1.6" /><Dot x={32} y={10} /><Dot x={32} y={23} /></PanelBtn>
                <PanelBtn><Cube /><Dot x={3} y={11} /><path d="M32 10v13" stroke={RED} strokeWidth="1.6" /><Dot x={32} y={10} /><Dot x={32} y={23} /></PanelBtn>
              </div>
              <div className="flex items-center mt-[4px]">
                <Label>1st point</Label>
                <Input w="w-[135px]" bg="bg-[#f0f0f0]" text="0,0,5" />
                <span className="ml-[7px]"><Chevrons /></span>
                <svg className="ml-[9px]" width="18" height="18" viewBox="0 0 18 18"><path d="M3 4v11l12-5" fill="none" stroke="#3a8fd0" strokeWidth="1.5" /><path d="M3 15l8 3" stroke="#e8a03a" strokeWidth="1.5" /><circle cx="14" cy="4" r="1.6" fill={RED} /></svg>
                <span className="ml-[5px] flex"><Caret /></span>
              </div>
              <div className="flex items-center mt-[5px]">
                <Label>2nd point</Label>
                <Input w="w-[135px]" text="36,-20,5" />
                <span className="ml-[7px]"><Chevrons /></span>
                <span className="ml-[10px]"><GreenPick /></span>
                <span className="ml-[6px] flex"><Caret /></span>
              </div>
              <div className="flex items-center mt-[6px]">
                <span className="ml-[8px] w-[103px] shrink-0 text-xs text-[#2b2f3a]">Height</span>
                <Input w="w-[156px]" text="3" unit />
                <span className="ml-[6px]"><GreenPick /></span>
                <span className="ml-[6px] flex"><Caret /></span>
              </div>
            </div>
          </Section>

          <Section title="Boolean" cls="mt-[3px]">
            <div className="pt-[4px] pb-[5px]">
              <div className="flex justify-center gap-[2px] pr-[3px]">
                <PanelBtn><Cube /></PanelBtn>
                <PanelBtn sel>
                  <polygon points="8,8 22,2 32,7 18,13" fill={Y} /><polygon points="8,8 18,13 18,18 8,14" fill={O} /><polygon points="18,13 32,7 32,12 18,18" fill={Y} />
                  <polygon points="3,19 18,13 33,18 18,24" fill={T} /><polygon points="3,19 18,24 18,32 3,26" fill={L} /><polygon points="18,24 33,18 33,26 18,32" fill={R} />
                </PanelBtn>
                <PanelBtn>
                  <Cube /><polygon points="8,11 20,5 30,11 18,18" fill={O} /><polygon points="12,12 20,8 26,11 18,15" fill={R} />
                </PanelBtn>
                <PanelBtn>
                  <polygon points="3,21 18,14 33,21 18,29" fill="#8fd2ea" /><polygon points="3,21 18,29 18,33 3,25" fill="#57b2d4" /><polygon points="18,29 33,21 33,25 18,33" fill="#2d8fb4" />
                  <rect x="11" y="3" width="14" height="26" fill="#cfeef8" opacity=".7" /><ellipse cx="18" cy="4" rx="7" ry="2.5" fill="#8fd2ea" /><ellipse cx="18" cy="20" rx="8" ry="3.4" fill={Y} stroke="#9a7a20" strokeWidth=".5" />
                </PanelBtn>
              </div>
              <div className="flex items-center mt-[5px]">
                <span className="ml-[8px] w-[103px] shrink-0 text-xs text-[#2b2f3a] whitespace-nowrap">Boolean shapes</span>
                <Input w="w-[168px]" h="h-[20px]" />
                <span className="ml-[7px]"><Chevrons /></span>
              </div>
            </div>
          </Section>

          <Section title="Dimensions" cls="mt-[2px]">
            <div className="pt-[6px] pb-[4px] flex flex-col gap-[7px]">
              <div className="flex items-center">
                <span className="ml-[8px] w-[103px] shrink-0 text-xs text-[#2b2f3a]">Length</span>
                <Input w="w-[168px]" text="72" unit />
                <svg className="ml-[4px]" width="17" height="17" viewBox="0 0 17 17"><rect x="1" y="7" width="11" height="9" fill="#ffe9a8" stroke="#edc04e" /><path d="M8 7V4a3.5 3.5 0 0 1 7 0v3" fill="none" stroke="#edc04e" strokeWidth="1.4" /></svg>
              </div>
              <div className="flex items-center">
                <span className="ml-[8px] w-[103px] shrink-0 text-xs text-[#2b2f3a]">Width</span>
                <Input w="w-[168px]" text="46" unit />
                <svg className="ml-[6px]" width="14" height="17" viewBox="0 0 14 17"><rect x="1" y="6" width="12" height="10" fill="#ffedb8" stroke="#edc04e" /><path d="M4 6V3a3 3 0 0 1 6 0v3" fill="none" stroke="#edc04e" strokeWidth="1.4" /></svg>
              </div>
            </div>
          </Section>

          <Section title="Settings" cls="mt-[4px]">
            <div className="pt-[5px] pb-[3px] flex items-center">
              <Label>Align plane</Label>
              <Input w="w-[170px]" />
              <span className="ml-[6px]"><GreenPick c="#c8a02e" /></span>
            </div>
          </Section>

          <Section title="Tolerance" cls="mt-[4px]">
            <div className="pt-[5px] pb-[3px] flex items-center">
              <span className="ml-[8px] w-[101px] shrink-0 text-xs text-[#2b2f3a]">Tolerance</span>
              <Input w="w-[197px]" h="h-[20px]" text="0.0127" unit />
            </div>
          </Section>
        </div>
      </div>
    </div>
  );
}

function Cone({ tx, ty, bx, by, r }: { tx: number; ty: number; bx: number; by: number; r: number }) {
  const a = Math.atan2(by - ty, bx - tx);
  const px = -Math.sin(a) * r;
  const py = Math.cos(a) * r;
  const deg = (a * 180) / Math.PI;
  return (
    <g>
      <polygon points={`${tx},${ty} ${bx + px},${by + py} ${bx - px},${by - py}`} fill="url(#gC)" />
      <ellipse cx={bx} cy={by} rx={r * 0.35} ry={r} fill="#14cde0" transform={`rotate(${deg} ${bx} ${by})`} />
    </g>
  );
}

function Octa({ x, y, r }: { x: number; y: number; r: number }) {
  return (
    <g>
      <polygon points={`${x},${y - r} ${x + r},${y} ${x},${y + r} ${x - r},${y}`} fill="#e815e8" />
      <polygon points={`${x},${y - r} ${x + r},${y} ${x},${y + r * 0.3}`} fill="#f55cf5" />
    </g>
  );
}

function Scene() {
  const dash = { stroke: "#111", strokeWidth: 2.6, strokeDasharray: "7 5", fill: "none" };
  return (
    <svg className="absolute left-0 top-0" width="1559" height="816" viewBox="361 194 1559 816">
      {/* scene coords below are in 3x units, offset from 900,450 */}
      <g transform="translate(900 450) scale(0.3333)" fontFamily="Liberation Sans">
        <polygon points="870,48 1358,330 570,790 80,505" fill="url(#gTop)" stroke="#8e9e8e" strokeWidth="2.5" />
        <polygon points="80,505 570,790 570,862 80,582" fill="#c3c3c3" stroke="#8e9e8e" strokeWidth="2.5" />
        <polygon points="570,790 1358,330 1358,408 570,862" fill="#5e5e5e" />

        <polygon points="318,345 808,628 808,648 318,365" fill="#8fd88f" />
        <polygon points="808,628 1115,452 1115,470 808,648" fill="#357a35" />
        <polygon points="630,165 1115,452 808,628 318,345" fill="#84d584" stroke="#a4f0a4" strokeWidth="4" />
        <path d="M318 365L808 648L1115 470" fill="none" stroke="#a4f0a4" strokeWidth="3" />

        <path d="M555 460L717 365L880 460L717 555Z" fill="#6cc76c" fillOpacity=".2" stroke="#5aa86a" strokeWidth="1.2" />
        <polygon points="635,408 802,315 802,350 635,445" fill="#b89a70" fillOpacity=".35" />
        <path d="M635 600V315L802 410V600" fill="none" stroke="#3fae5f" strokeWidth="1.5" opacity=".7" />
        <path d="M635 440V408L802 315V350" fill="none" stroke="#e8382a" strokeWidth="2.5" />
        <path d="M802 315V600" stroke="#8aa88a" strokeWidth="1.5" />
        <path d="M717 460V380" stroke="#6fa8b8" strokeWidth="14" />
        <path d="M717 460L800 505" stroke="#b09a6c" strokeWidth="12" />
        <path d="M717 460L790 415" stroke="#66d87a" strokeWidth="8" />
        <polygon points="786,402 816,402 794,428" fill="#4fe06a" />
        <polygon points="717,340 734,380 717,392 700,380" fill="#2636d8" />
        <text x="704" y="336" fontSize="42" fill="#1030e0">Z</text>
        <text x="828" y="398" fontSize="36" fill="#9fe29f">Y</text>

        <path d="M510 118L610 178M422 185L470 160" {...dash} />
        <Cone tx={522} ty={128} bx={462} by={162} r={23} />
        <text x="344" y="232" fontSize="45" fill="#1c1c1c">46</text>
        <path d="M285 265L318 245M198 298L315 368" {...dash} />
        <Cone tx={215} ty={305} bx={272} by={272} r={23} />
        <path d="M215 410L318 345M220 425L315 368" stroke="#111" strokeWidth="2.4" />
        <Cone tx={213} ty={398} bx={212} by={336} r={19} />
        <Cone tx={225} ty={435} bx={275} by={455} r={18} />
        <Octa x={212} y={422} r={23} />
        <path d="M275 460L405 537M510 600L635 670" {...dash} />
        <text x="437" y="584" fontSize="45" fill="#555">72</text>
        <Cone tx={695} ty={705} bx={638} by={672} r={22} />
        <text x="668" y="612" fontSize="45" fill="#222">-38</text>
        <path d="M590 655L660 615M569 680V780" stroke="#111" strokeWidth="2.6" />
        <polygon points="555,648 590,655 585,688 562,680" fill="#a312a8" />
        <path d="M590 775L805 652" stroke="#22e022" strokeWidth="11" strokeDasharray="28 11" />
        <path d="M548 787H592M569 768V810" stroke="#f5a81f" strokeWidth="3" strokeDasharray="10 20" />
        <polygon points="569,778 582,785 569,800 556,785" fill="#12b6cc" />
        <circle cx="830" cy="638" r="21" fill="none" stroke="#b7f0b7" strokeWidth="4" />
        <polygon points="830,626 842,638 830,650 820,638" fill="#6a14c0" />
        <path d="M826 540V625" stroke="#111" strokeWidth="2.6" />
        <path d="M790 495L815 510M765 555L815 530" {...dash} />
        <Cone tx={845} ty={510} bx={892} by={480} r={21} />
        <Cone tx={845} ty={530} bx={890} by={554} r={21} />
        <Octa x={830} y={518} r={19} />
      </g>

      <g fontFamily="Liberation Sans" fontSize="14">
        <path d="M416.5 953V925" stroke="#0000e0" strokeWidth="5" />
        <polygon points="416.5,913 422,927 411,927" fill="#1a1af0" />
        <text x="412" y="912" fill="#1a1af0">Z</text>
        <path d="M416.5 953L440 939" stroke="#0ecb0e" strokeWidth="5" />
        <polygon points="451,933 443,945 436,935" fill="#18e018" />
        <text x="454" y="934" fill="#20e020">Y</text>
        <path d="M416.5 953L440 966" stroke="#f01010" strokeWidth="5" />
        <polygon points="451,972 436,971 442,961" fill="#ff6a6a" />
        <text x="454" y="982" fill="#f01818">X</text>
      </g>
    </svg>
  );
}

function ViewBar() {
  const v: { c: ReactNode; caret?: boolean }[] = [
    { c: <><rect x="6" y="2" width="12" height="16" fill="#1b5c7a" /><path d="M1 10h10" stroke={RED} strokeWidth="3" /><polygon points="8,5 13,10 8,15" fill={RED} /></> },
    { c: <><circle cx="7" cy="4" r="3" fill="#4aa3c7" /><path d="M7 7v8" stroke="#4aa3c7" strokeWidth="3" /><rect x="6" y="11" width="12" height="7" fill="#77bb55" /></>, caret: true },
    { c: <><polygon points="4,14 13,2 17,5 9,17" fill="#f3f3f3" stroke="#b5b5b5" /><polygon points="4,14 8,9 12,13 9,17" fill="#d83a32" /></> },
    { c: <><polygon points="10,3 18,7 10,11 2,7" fill={Y} /><polygon points="2,7 10,11 10,19 2,15" fill={T} /><polygon points="10,11 18,7 18,15 10,19" fill={L} /></> },
    { c: <><polygon points="10,1 17,4 10,7 3,4" fill={T} /><polygon points="3,4 10,7 10,19 3,16" fill={T} /><polygon points="10,7 17,4 17,16 10,19" fill={R} /></>, caret: true },
    { c: <><polygon points="4,3 14,1 17,14 8,19 3,14" fill={L} /><rect x="6" y="4" width="6" height="8" fill="#bfe3f2" /></>, caret: true },
    { c: <><polygon points="10,2 18,6 18,14 10,18 2,14 2,6" fill="#f5a81f" stroke="#c0641a" /><path d="M10 2v16M2 6l16 8M18 6L2 14" stroke="#c0641a" strokeWidth=".8" /></>, caret: true },
    { c: <><rect x="2" y="1" width="16" height="18" fill="#a6d4ea" stroke="#2d93b8" /><circle cx="10" cy="10" r="5" fill="none" stroke="#c89a2c" strokeWidth="2.4" /></>, caret: true },
    { c: <><rect x="3" y="2" width="14" height="16" fill="#fff" stroke="#7fb5cc" /><path d="M12 6v2M7 13h3" stroke="#2d93b8" strokeWidth="1.6" /></> },
    { c: <><rect x="4" y="1" width="12" height="17" fill="#fff" stroke="#2d93b8" /><path d="M4 9h12" stroke="#2d93b8" /><path d="M3 18h14" stroke={RED} strokeWidth="2" /></>, caret: true },
    { c: <><rect x="3" y="1" width="14" height="16" fill="#6f8792" /><polygon points="10,4 15,12 5,12" fill="#35a7cf" /><rect x="3" y="16" width="14" height="3" fill="#aaa" /></>, caret: true },
    { c: <rect x="2" y="5" width="16" height="10" fill="#000" /> },
    { c: <rect x="3" y="1" width="14" height="18" fill="#a9d7f2" stroke="#6da0c0" /> },
    { c: <><polygon points="10,3 18,7 10,12 2,7" fill="#3fd0d0" /><polygon points="2,7 10,12 10,18 2,13" fill="#1f8a9a" /><polygon points="10,12 18,7 18,13 10,18" fill="#136a7a" /></>, caret: true },
  ];
  return (
    <div className="flex items-center h-[22px] mt-[5px] ml-[492px] gap-[5px] relative z-10">
      {v.map((i, k) => (
        <div key={k} className="flex items-center gap-[5px]">
          <svg viewBox="0 0 20 20" width="18" height="18">{i.c}</svg>
          {i.caret && <span className="w-[12px] flex justify-center"><Caret /></span>}
        </div>
      ))}
      <div className="-ml-[2px] w-[121px] h-[22px] bg-[#e9eaeb] border border-[#dcdee0] flex items-center text-xs text-[#8a8e94] pl-[5px]">
        <svg width="12" height="14" viewBox="0 0 12 14"><path d="M3 9a4 4 0 1 1 6 0v2H3z" fill="none" stroke="#a0a4a8" /><path d="M4 13h4" stroke="#a0a4a8" /></svg>
        <span className="ml-[3px] w-[13px] h-[13px] rounded-full border border-[#a0a4a8] bg-[#d4d6d8]" />
        <span className="ml-[3px]">Layer0000</span>
        <span className="ml-auto mr-[9px] flex"><Caret c="border-t-[#b0b3b7]" /></span>
      </div>
    </div>
  );
}

function Viewport() {
  return (
    <div className="flex-1 min-w-0 flex flex-col">
      <div className="h-[22px] flex shrink-0 items-end border-b border-[#c6ccd3] relative">
        <div className="w-[155px] h-[22px] -mb-px bg-white border-x border-t border-[#c6ccd3] flex items-center text-xs text-[#333] relative z-10 whitespace-nowrap">
          <svg className="ml-[13px] shrink-0" width="10" height="10" viewBox="0 0 10 10"><path d="M5 0v10M0 5h10" stroke="#7a5a20" strokeWidth="1.6" /></svg>
          <span className="ml-[9px] w-[96px]">File001.Z3 - [Base]</span>
          <svg className="ml-[5px] shrink-0" width="10" height="10" viewBox="0 0 10 10"><path d="M1 1l8 8M9 1L1 9" stroke="#7a5a20" strokeWidth="1.4" /></svg>
        </div>
        <svg className="ml-[8px] mb-[5px]" width="11" height="11" viewBox="0 0 11 11"><path d="M5.5 0v11M0 5.5h11" stroke="#9a9ea4" strokeWidth="1.6" /></svg>
        <div className="ml-auto mr-[9px] mb-[6px] flex flex-col items-center gap-[1px]"><span className="w-[7px] h-px bg-[#555]" /><Caret c="border-t-[#555]" /></div>
      </div>
      <div className="flex-1 relative overflow-hidden bg-gradient-to-b from-white to-[#9f9f9f] border-b border-[#c6ccd3]">
        <Scene />
        <ViewBar />
        <div className="relative -mt-[1px] ml-[15px] text-[13px] leading-[17px] text-[#111] font-['Liberation_Sans',sans-serif]">
          <div>&lt;middle-click&gt; to continue.</div>
          <div>&lt;F8&gt; or &lt;Shift-roll&gt; to find next valid filter setting.</div>
        </div>
        <svg className="absolute left-[1441px] top-[45px]" width="24" height="20" viewBox="0 0 24 20"><path d="M3 10l6 6L21 3" fill="none" stroke="#a8e0a8" strokeWidth="4.4" /></svg>
        <svg className="absolute left-[1490px] top-[84px]" width="24" height="24" viewBox="0 0 24 24"><path d="M3 3l18 18M21 3L3 21" stroke="#eaa0a0" strokeWidth="5.4" /></svg>
        <span className="absolute left-[5px] bottom-[1px] text-base leading-5 text-[#1a1a1a]">254 mm</span>
      </div>
    </div>
  );
}

function StatusBar() {
  return (
    <div className="h-[30px] flex items-center shrink-0 text-xs text-[#333]">
      <span className="ml-[7px] mt-[3px]">&lt;middle-click&gt; to finish.</span>
      <span className="ml-auto w-px h-[28px] bg-[#a9adb2]" />
      <div className={`ml-[7px] w-[23px] h-[22px] ${Y_BTN}`}>
        <svg width="16" height="16" viewBox="0 0 16 16"><rect x="1" y="1" width="14" height="14" fill="#fff" stroke="#3b6cc0" /><rect x="1" y="1" width="14" height="3" fill="#3b6cc0" /><path d="M5 5h7M9 5v9" stroke="#d81f26" strokeWidth="2" /></svg>
      </div>
      <svg className="ml-[8px]" width="18" height="16" viewBox="0 0 18 16"><rect x="1" y="1" width="16" height="11" fill="#5fc2dc" stroke="#5a6a72" /><rect x="6" y="12" width="6" height="3" fill="#444" /></svg>
      <svg className="ml-[13px]" width="15" height="15" viewBox="0 0 15 15"><rect x="1" y="1" width="13" height="13" fill="#fff" stroke="#3b6cc0" /><rect x="1" y="1" width="13" height="3" fill="#3b6cc0" /><path d="M3 7h9M3 9.5h9M3 12h9" stroke="#777" /></svg>
      <div className="ml-[11px] w-[349px] h-[21px] mr-[1px] bg-white border border-[#c9cdd3]" />
    </div>
  );
}

export default function App() {
  return (
    <div className="w-[1920px] h-[1042px] overflow-hidden bg-[#e3e5e8] flex flex-col text-[#333] font-['Roboto',sans-serif]">
      <Defs />
      <TitleBar />
      <TabBar />
      <Ribbon />
      <Toolbar />
      <div className="flex-1 flex min-h-0">
        <Panel />
        <div className="w-[3px] shrink-0" />
        <Viewport />
      </div>
      <StatusBar />
      <div className="h-[2px] bg-[#222] shrink-0 flex">
        <span className="ml-[48px] w-[344px] bg-[#c9cbce]" />
      </div>
    </div>
  );
}
